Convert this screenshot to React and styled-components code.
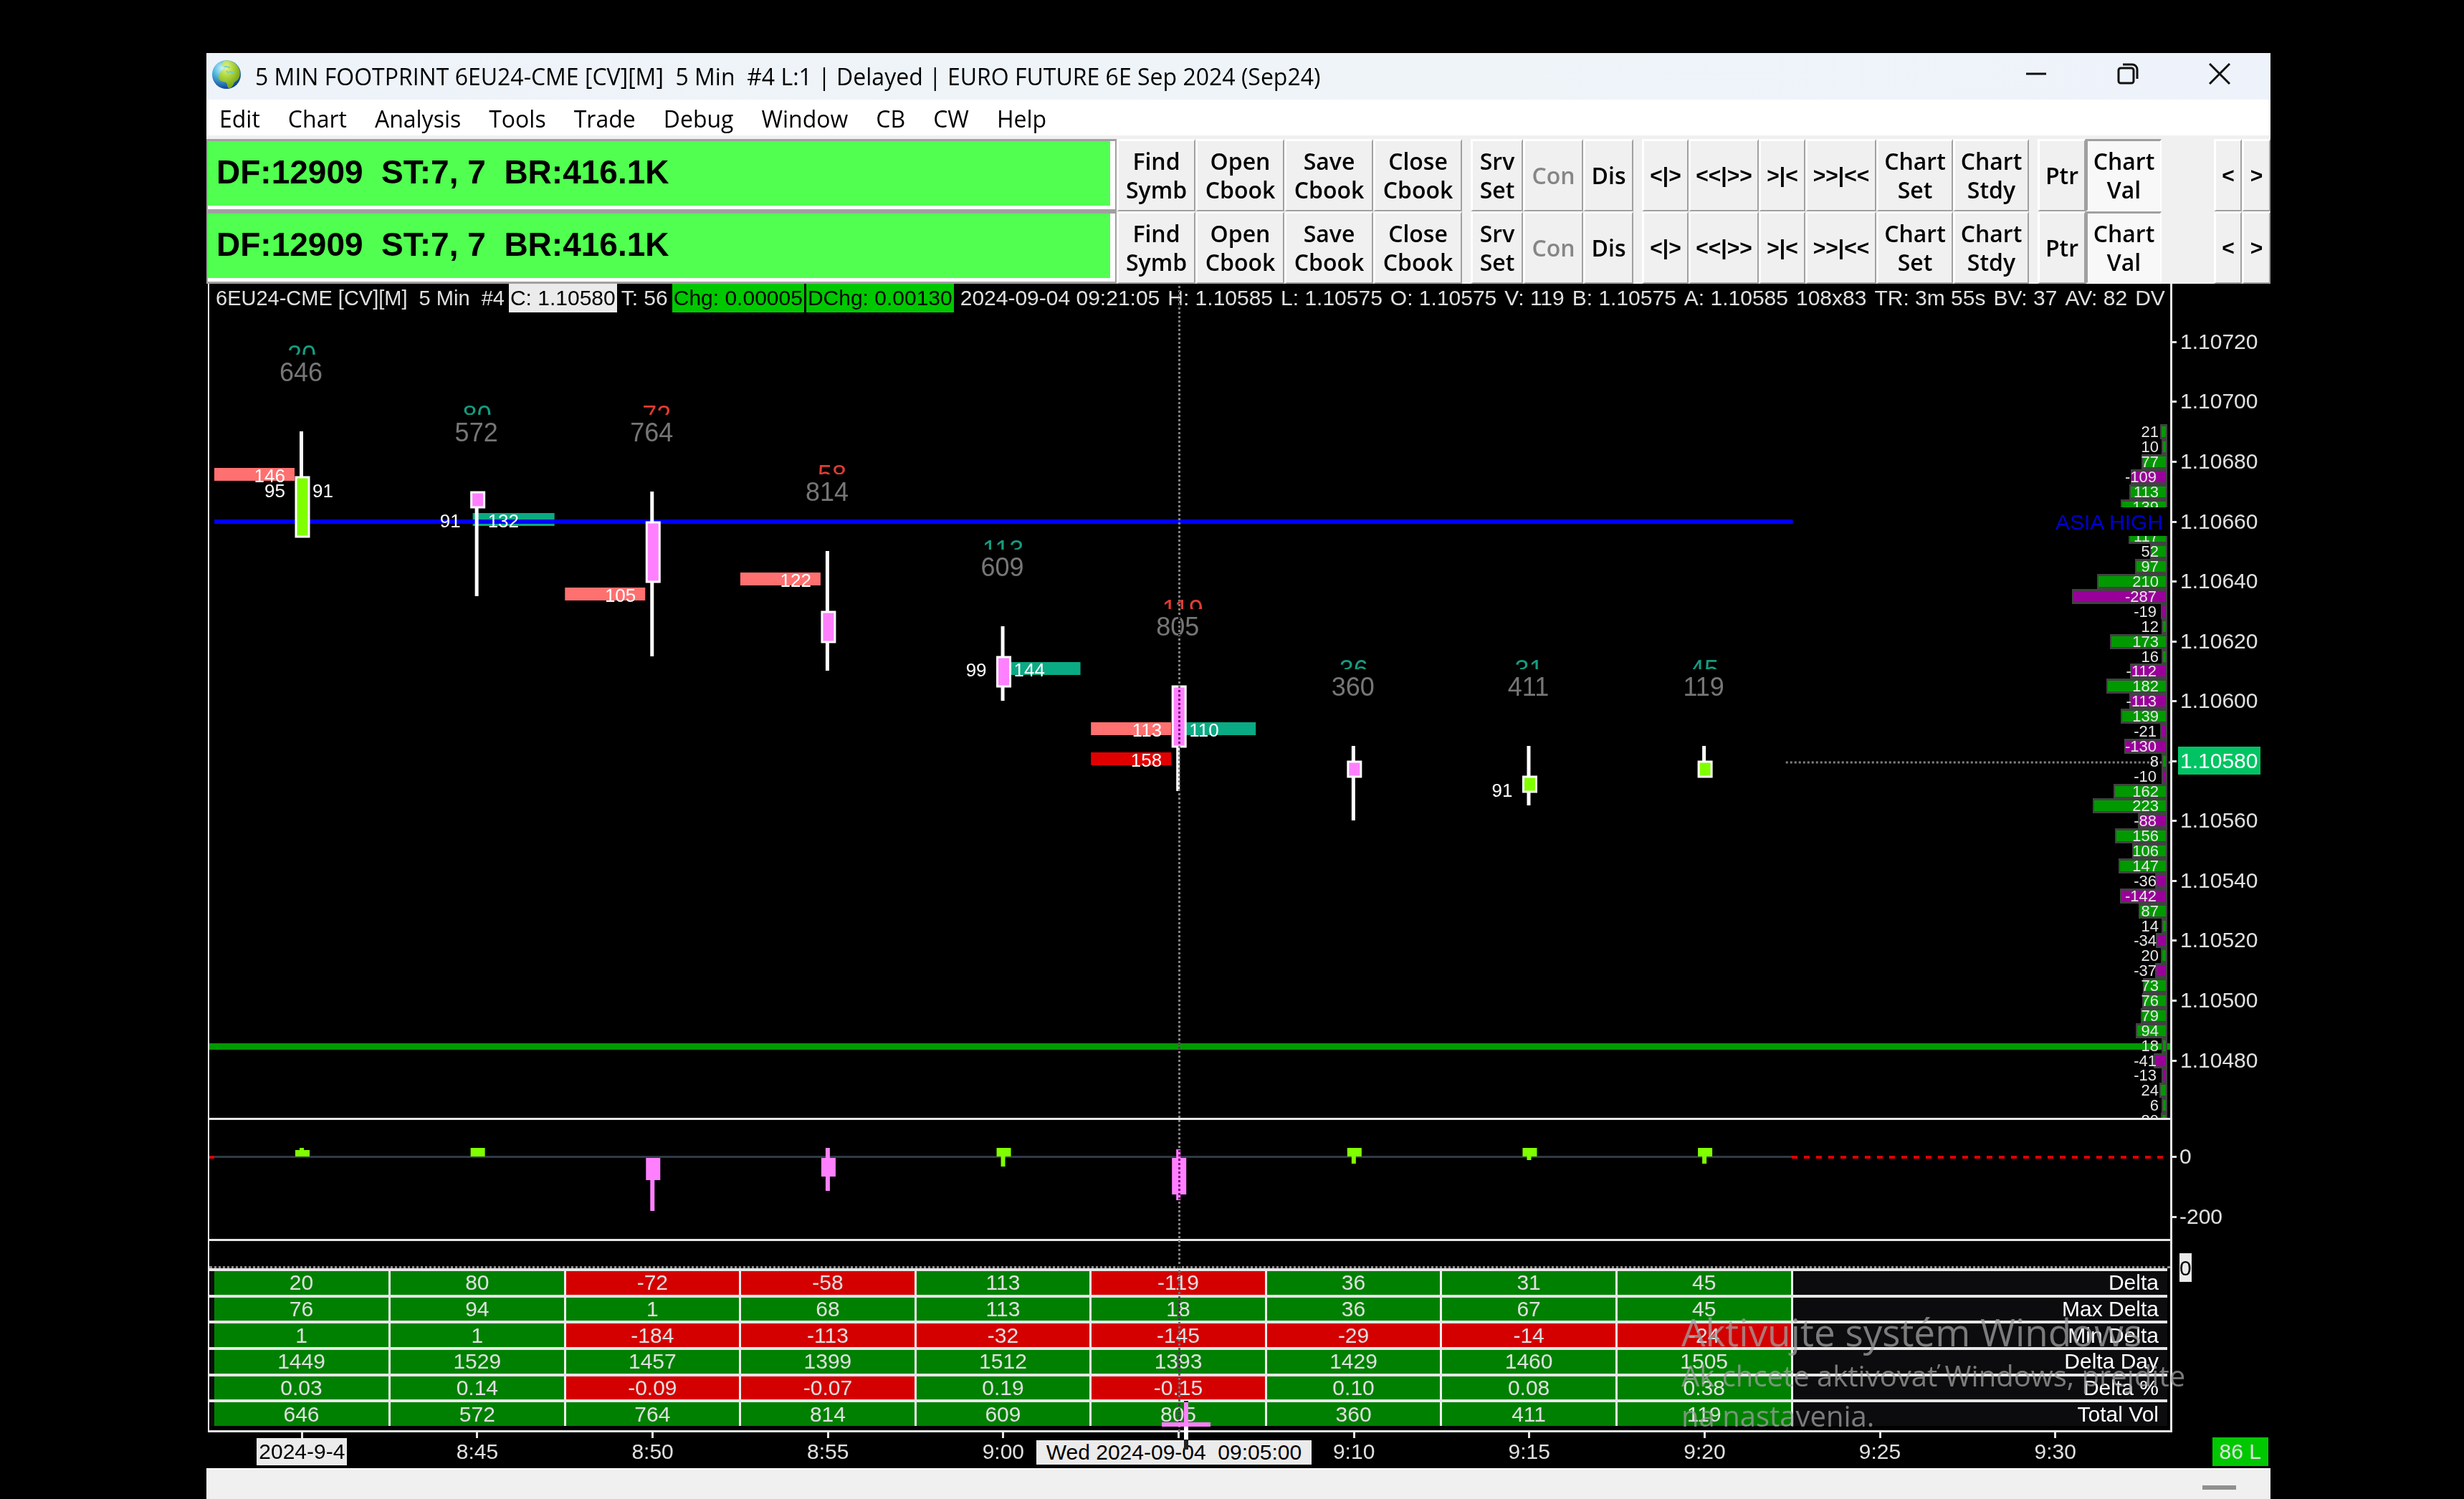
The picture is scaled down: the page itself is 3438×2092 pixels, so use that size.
import styled, { createGlobalStyle } from "styled-components";

const GREEN = "#80ff00";
const PINK = "#ff80ff";
const TEAL = "#0aaa84";
const CORAL = "#ff7070";
const PLOT_WIDTH = 2736;

const menus = ["Edit", "Chart", "Analysis", "Tools", "Trade", "Debug", "Window", "CB", "CW", "Help"];

const toolGroups = [
  [
    { label: "Find\nSymb", w: 110 },
    { label: "Open\nCbook", w: 124 },
    { label: "Save\nCbook", w: 124 },
    { label: "Close\nCbook", w: 124 },
  ],
  [
    { label: "Srv\nSet", w: 73 },
    { label: "Con", w: 84, disabled: true },
    { label: "Dis", w: 70 },
  ],
  [
    { label: "<|>", w: 65, symbol: true },
    { label: "<<|>>", w: 98, symbol: true },
    { label: ">|<", w: 65, symbol: true },
    { label: ">>|<<", w: 99, symbol: true },
    { label: "Chart\nSet", w: 107 },
    { label: "Chart\nStdy", w: 106 },
  ],
  [
    { label: "Ptr", w: 67 },
    { label: "Chart\nVal", w: 106, pressed: true },
  ],
];

const scrollTools = [
  { label: "<", w: 39, symbol: true },
  { label: ">", w: 40, symbol: true },
];

const quote = [
  "2024-09-04 09:21:05",
  "H: 1.10585",
  "L: 1.10575",
  "O: 1.10575",
  "V: 119",
  "B: 1.10575",
  "A: 1.10585",
  "108x83",
  "TR: 3m 55s",
  "BV: 37",
  "AV: 82",
  "DV",
];

// prices are in points: 10690 is 1.10690
const candles = [
  { up: true, high: 10690, low: 10655, top: 10675, bottom: 10655, delta: 20, total: 646 },
  { high: 10670, low: 10635, top: 10670, bottom: 10665, delta: 80, total: 572 },
  { high: 10670, low: 10615, top: 10660, bottom: 10640, delta: -72, total: 764 },
  { high: 10650, low: 10610, top: 10630, bottom: 10620, delta: -58, total: 814 },
  { high: 10625, low: 10600, top: 10615, bottom: 10605, delta: 113, total: 609 },
  { high: 10605, low: 10570, top: 10605, bottom: 10585, delta: -119, total: 805 },
  { high: 10585, low: 10560, top: 10580, bottom: 10575, delta: 36, total: 360 },
  { up: true, high: 10585, low: 10565, top: 10575, bottom: 10570, delta: 31, total: 411 },
  { up: true, high: 10585, low: 10575, top: 10580, bottom: 10575, delta: 45, total: 119 },
];

const prints = [
  { slot: 0, price: 10675, bid: 146, bidFill: CORAL },
  { slot: 0, price: 10670, bid: 95, ask: 91 },
  { slot: 1, price: 10660, bid: 91, ask: 132, askFill: TEAL },
  { slot: 2, price: 10635, bid: 105, bidFill: CORAL },
  { slot: 3, price: 10640, bid: 122, bidFill: CORAL },
  { slot: 4, price: 10610, bid: 99, ask: 144, askFill: TEAL },
  { slot: 5, price: 10590, bid: 113, bidFill: CORAL, ask: 110, askFill: TEAL },
  { slot: 5, price: 10580, bid: 158, bidFill: "#e00000" },
  { slot: 7, price: 10570, bid: 91 },
];

// delta per price, from 1.10690 down in half-pip steps; null is behind the line label
const profile = [
  21, 10, 77, -109, 113, 139, null, 117, 52, 97, 210, -287, -19, 12, 173, 16, -112, 182, -113, 139, -21, -130,
  8, -10, 162, 223, -88, 156, 106, 147, -36, -142, 87, 14, -34, 20, -37, 73, 76, 79, 94, 18, -41, -13, 24, 6, 20,
].map((value, i) => ({ value, y: priceY(10690 - i * 5) }));

// [body top, body bottom, wick top, wick bottom]
const deltaBars = [
  [42, 51, 39, 51],
  [39, 51, 39, 51],
  [53, 84, 53, 127],
  [53, 79, 39, 99],
  [39, 51, 39, 65],
  [53, 104, 41, 112],
  [39, 51, 39, 61],
  [39, 51, 39, 56],
  [39, 51, 39, 61],
];

const stats = [
  ["Delta", ["20", "80", "-72", "-58", "113", "-119", "36", "31", "45"]],
  ["Max Delta", ["76", "94", "1", "68", "113", "18", "36", "67", "45"]],
  ["Min Delta", ["1", "1", "-184", "-113", "-32", "-145", "-29", "-14", "-24"]],
  ["Delta Day", ["1449", "1529", "1457", "1399", "1512", "1393", "1429", "1460", "1505"]],
  ["Delta %", ["0.03", "0.14", "-0.09", "-0.07", "0.19", "-0.15", "0.10", "0.08", "0.38"]],
  ["Total Vol", ["646", "572", "764", "814", "609", "805", "360", "411", "119"]],
];

const times = ["2024-9-4", "8:45", "8:50", "8:55", "9:00", "", "9:10", "9:15", "9:20", "9:25", "9:30"];
const axisPrices = [10720, 10700, 10680, 10660, 10640, 10620, 10600, 10580, 10560, 10540, 10520, 10500, 10480];

function slotX(i) {
  return `${((129 + 244.64 * i) / PLOT_WIDTH) * 100}%`;
}

function priceY(p) {
  return Math.round(208 + (10680 - p) * 4.1775);
}

const Globe = () => (
  <svg width="40" height="42" viewBox="0 0 40 42" aria-hidden="true">
    <defs>
      <radialGradient id="sea" cx="35%" cy="28%" r="75%">
        <stop offset="0" stopColor="#c8f4fb" />
        <stop offset="0.45" stopColor="#4ab2dc" />
        <stop offset="1" stopColor="#0c3f94" />
      </radialGradient>
      <radialGradient id="land" cx="35%" cy="25%" r="80%">
        <stop offset="0" stopColor="#e6f58a" />
        <stop offset="0.5" stopColor="#a4cf35" />
        <stop offset="1" stopColor="#6f9a12" />
      </radialGradient>
    </defs>
    <circle cx="20" cy="21" r="20" fill="url(#sea)" />
    <path
      d="M17 2c8-2 17 3 20 10 3 6 2 12-1 16-3 3-5 3-6 6-1 3-4 7-7 6-3-2-1-6-4-8-4-1-9-2-10-6-1-4 2-6 3-9 2-3 5-2 6-5 0-2-4-1-4-4 0-3 1-5 3-6z"
      fill="url(#land)"
    />
    <path d="M17 10c3-1 5 1 8 1M24 17c3 0 4 2 7 2M20 16l3 3" stroke="#6fd0c8" strokeWidth="2" fill="none" />
  </svg>
);

const Tool = ({ tool }) => (
  <ToolButton $w={tool.w} $pressed={tool.pressed} $symbol={tool.symbol} disabled={tool.disabled}>
    {tool.label}
  </ToolButton>
);

const Toolbar = () => (
  <ToolRow>
    <StatusField>{"DF:12909  ST:7, 7  BR:416.1K"}</StatusField>
    {toolGroups.map((group, i) => (
      <ToolGroup key={i}>
        {group.map((tool) => (
          <Tool key={tool.label} tool={tool} />
        ))}
      </ToolGroup>
    ))}
    <ScrollGroup>
      {scrollTools.map((tool) => (
        <Tool key={tool.label} tool={tool} />
      ))}
    </ScrollGroup>
  </ToolRow>
);

const Candle = ({ data, slot }) => {
  const high = priceY(data.high);
  const top = priceY(data.top);
  return (
    <svg x={slotX(slot)} overflow="visible">
      <rect x="-3" y={high} width="5" height={priceY(data.low) - high} fill="#fff" />
      <rect
        x="-8"
        y={top + 1}
        width="18"
        height={priceY(data.bottom) - top}
        fill={data.up ? GREEN : PINK}
        stroke="#fff"
        strokeWidth="3"
      />
      <svg x="-60" y={high - 123} width="120" height="16">
        <PlotText $size={36} x="60" y="29" textAnchor="middle" fill={data.delta < 0 ? "#e23c32" : "#159c80"}>
          {data.delta}
        </PlotText>
      </svg>
      <PlotText $size={36} x="-1" y={high - 70} textAnchor="middle" fill="#767676">
        {data.total}
      </PlotText>
    </svg>
  );
};

const MainPlot = () => (
  <PlotSvg $h={1124}>
    <rect x="0" y={priceY(10485) - 3} width="100%" height="9" fill="#009900" />
    {prints.map((p) => (
      <svg key={p.slot + "-" + p.price} x={slotX(p.slot)} y={priceY(p.price)} overflow="visible">
        {p.bidFill && <rect x="-122" y="-12" width="112" height="18" fill={p.bidFill} />}
        {p.askFill && <rect x="-6" y="-12" width="114" height="18" fill={p.askFill} />}
      </svg>
    ))}
    <rect x="7" y="289" width="80.5%" height="6" fill="#0000ff" />
    {candles.map((c, i) => (
      <Candle key={i} data={c} slot={i} />
    ))}
    {prints.map((p) => (
      <svg key={p.slot + "-" + p.price} x={slotX(p.slot)} y={priceY(p.price)} overflow="visible">
        <PlotText $size={26} x="-23" y="8" textAnchor="end" fill="#fff">
          {p.bid}
        </PlotText>
        {p.ask && (
          <PlotText $size={26} x="15" y="8" fill="#fff">
            {p.ask}
          </PlotText>
        )}
      </svg>
    ))}
    <line x1="80.4%" x2="100%" y1="628" y2="628" stroke="#808080" strokeWidth="3" strokeDasharray="3 3" />
    <svg x="100%" overflow="visible">
      {profile.map(({ value, y }) => {
        const w = Math.max(4, Math.round(Math.abs(value) * 0.465 - 4));
        return (
          <g key={y}>
            <rect x={-8 - w} y={y - 10} width={w + 4} height="21" fill="#424242" />
            <rect x={-6 - w} y={y - 7} width={w} height="15" fill={value < 0 ? "#990099" : "#009900"} />
          </g>
        );
      })}
      {profile.map(({ value, y }) => (
        <PlotText key={y} $size={22} x={value < 0 ? -19 : -16} y={y + 8} textAnchor="end" fill="#e6e6e6">
          {value}
        </PlotText>
      ))}
      <rect x="-200" y="272" width="198" height="40" fill="#000" />
      <PlotText $size={30} x="-10" y="303" textAnchor="end" fill="#0000d0">
        ASIA HIGH
      </PlotText>
    </svg>
  </PlotSvg>
);

const DeltaPlot = () => (
  <PlotSvg $h={166}>
    <rect x="0" y="50" width="7" height="4" fill="#e00000" />
    <rect x="7" y="50" width="80.5%" height="3" fill="#303a46" />
    <line x1="80.7%" x2="99.8%" y1="52" y2="52" stroke="#e00000" strokeWidth="4" strokeDasharray="8 9" />
    {deltaBars.map(([top, bottom, wickTop, wickBottom], i) => {
      const fill = top < 52 ? GREEN : PINK;
      return (
        <svg key={i} x={slotX(i)} overflow="visible">
          <rect x="-3" y={wickTop} width="6" height={wickBottom - wickTop} fill={fill} />
          <rect x="-9" y={top} width="20" height={bottom - top} fill={fill} />
        </svg>
      );
    })}
  </PlotSvg>
);

const PriceAxis = () => (
  <PlotSvg $h={1600}>
    {axisPrices.map((p) => {
      const y = priceY(p) + 40;
      const last = p === 10580;
      return (
        <g key={p}>
          <rect x="0" y={y - 1} width="6" height="3" fill="#e6e6e6" />
          {last && <rect x="8" y={y - 20} width="115" height="39" fill="#00c463" />}
          <PlotText $size={30} x="11" y={y + 10} fill={last ? "#fff" : "#e0e0e0"}>
            {`1.${p}`}
          </PlotText>
        </g>
      );
    })}
    <rect x="0" y="1217" width="6" height="3" fill="#e6e6e6" />
    <PlotText $size={30} x="10" y="1228" fill="#e0e0e0">
      0
    </PlotText>
    <rect x="0" y="1301" width="6" height="3" fill="#e6e6e6" />
    <PlotText $size={30} x="10" y="1312" fill="#e0e0e0">
      -200
    </PlotText>
    <rect x="10" y="1353" width="17" height="40" fill="#ebebeb" />
    <PlotText $size={30} x="10" y="1384" fill="#000">
      0
    </PlotText>
  </PlotSvg>
);

const StatsTable = () => (
  <Stats>
    <colgroup>
      <col width="7" />
      {candles.map((c, i) => (
        <col key={i} />
      ))}
      <col width="524" />
    </colgroup>
    <tbody>
      {stats.map(([name, values]) => (
        <tr key={name}>
          <td />
          {values.map((v, i) => (
            <StatCell key={i} $negative={v.startsWith("-")}>
              {v}
            </StatCell>
          ))}
          <StatName scope="row">{name}</StatName>
        </tr>
      ))}
    </tbody>
  </Stats>
);

const App = () => (
  <>
    <GlobalStyle />
    <Desktop>
      <AppWindow>
        <TitleBar>
          <Globe />
          <Title>{"5 MIN FOOTPRINT 6EU24-CME [CV][M]  5 Min  #4 L:1 | Delayed | EURO FUTURE 6E Sep 2024 (Sep24)"}</Title>
          <WindowButton aria-label="Minimize">
            <svg width="30" height="30" viewBox="0 0 30 30" stroke="#111" strokeWidth="3">
              <path d="M1 15h28" />
            </svg>
          </WindowButton>
          <WindowButton aria-label="Restore">
            <svg width="30" height="30" viewBox="0 0 30 30" fill="none" stroke="#111" strokeWidth="3">
              <rect x="2" y="7" width="21" height="21" rx="3" />
              <path d="M8 2h13a7 7 0 0 1 7 7v13" />
            </svg>
          </WindowButton>
          <WindowButton aria-label="Close">
            <svg width="30" height="30" viewBox="0 0 30 30" stroke="#111" strokeWidth="3">
              <path d="M1 1l28 28M29 1L1 29" />
            </svg>
          </WindowButton>
        </TitleBar>
        <MenuBar>
          {menus.map((m) => (
            <MenuButton key={m}>{m}</MenuButton>
          ))}
        </MenuBar>
        <Toolbars>
          <Toolbar />
          <Toolbar />
        </Toolbars>
        <Chart>
          <Plots>
            <InfoBar>
              <Symbol>{"6EU24-CME [CV][M]  5 Min  #4"}</Symbol>
              <Tag>C: 1.10580</Tag>
              <span>T: 56</span>
              <Tag $green>Chg: 0.00005</Tag>
              <Tag $green>DChg: 0.00130</Tag>
              <Quote>
                {quote.map((q) => (
                  <span key={q}>{q}</span>
                ))}
              </Quote>
            </InfoBar>
            <MainPlot />
            <Divider />
            <DeltaPlot />
            <Divider />
            <StatsGap />
            <StatsTable />
          </Plots>
          <PriceAxis />
          <TimeAxis>
            {times.map((t, i) => (
              <TimeSlot key={i}>{i === 0 ? <DateLabel>{t}</DateLabel> : t}</TimeSlot>
            ))}
          </TimeAxis>
          <LastCell>
            <CountBadge>86 L</CountBadge>
          </LastCell>
          <Crosshair />
          <CursorTime>{"Wed 2024-09-04  09:05:00"}</CursorTime>
          <Cursor width="68" height="68" viewBox="0 0 68 68" aria-hidden="true">
            <path d="M34 0v68" stroke="#222" strokeWidth="6" />
            <path d="M34 2v30M0 33h68" stroke={PINK} strokeWidth="6" />
            <path d="M34 36v18" stroke="#fff" strokeWidth="6" />
          </Cursor>
          <Watermark>
            <h2>Aktivujte systém Windows</h2>
            <p>
              Ak chcete aktivovať Windows, prejdite
              <br />
              na nastavenia.
            </p>
          </Watermark>
        </Chart>
        <Footer>
          <Grip />
        </Footer>
      </AppWindow>
    </Desktop>
  </>
);

export default App;

const GlobalStyle = createGlobalStyle`
  * {
    box-sizing: border-box;
  }

  body {
    margin: 0;
    background: #000;
    font-family: "Liberation Sans", Arial, sans-serif;
  }

  button {
    margin: 0;
    padding: 0;
    border: 0;
    background: none;
    font: inherit;
    color: inherit;
  }
`;

const Desktop = styled.main`
  min-height: 100vh;
  padding: 74px 270px 0 288px;
  background: #000;
`;

const AppWindow = styled.div`
  min-height: calc(100vh - 74px);
  display: flex;
  flex-direction: column;
  background: #f0f0f0;
  color: #000;
`;

const TitleBar = styled.header`
  display: flex;
  align-items: flex-start;
  height: 65px;
  padding: 0 7px 0 8px;
  background: linear-gradient(90deg, #eef3fa, #eff4f8 50%, #eef3fb);

  > svg {
    margin-top: 9px;
  }
`;

const Title = styled.h1`
  flex: 1;
  margin: 0 0 0 20px;
  font: 400 32px/65px "Open Sans", sans-serif;
  white-space: pre;
`;

const WindowButton = styled.button`
  display: flex;
  align-items: center;
  justify-content: center;
  width: 128px;
  height: 57px;
`;

const MenuBar = styled.nav`
  display: flex;
  gap: 39px;
  height: 50px;
  padding-left: 18px;
  background: #fff;
`;

const MenuButton = styled.button`
  font: 400 32px/54px "Open Sans", sans-serif;
`;

const Toolbars = styled.div`
  padding-top: 5px;
`;

const ToolRow = styled.div`
  display: flex;
  height: 101px;
`;

const StatusField = styled.div`
  flex: 1;
  border: solid #a0a0a0;
  border-width: 3px 2px;
  box-shadow: inset -7px -5px #fff;
  background: #50ff50;
  padding-left: 12px;
  font-size: 46px;
  font-weight: 700;
  line-height: 86px;
  white-space: pre;
`;

const ToolGroup = styled.div`
  display: flex;

  & + & {
    margin-left: 12px;
  }
`;

const ScrollGroup = styled.div`
  display: flex;
  margin-left: 73px;
`;

const ToolButton = styled.button`
  width: ${(p) => p.$w}px;
  border: solid;
  border-width: 3px 2px 2px 3px;
  border-color: ${(p) => (p.$pressed ? "#a0a0a0 #fff #fff #a0a0a0" : "#fff #a0a0a0 #a0a0a0 #fff")};
  background: ${(p) => (p.$pressed ? "#f8f8f8" : "#f0f0f0")};
  font: 600 32px/40px "Open Sans", sans-serif;
  white-space: pre;
  color: #000;

  ${(p) => p.$symbol && `font: 700 30px/40px "Liberation Sans", Arial, sans-serif;`}

  &:disabled {
    color: #868686;
  }
`;

const Chart = styled.section`
  position: relative;
  display: grid;
  grid-template-columns: 1fr 137px;
  padding-left: 2px;
  background: #000;
  color: #e0e0e0;
  font-size: 30px;
  border-bottom: 2px solid #fff;
`;

const Plots = styled.div`
  min-width: 0;
  border: solid #e6e6e6;
  border-width: 0 3px 3px 2px;
`;

const InfoBar = styled.div`
  display: flex;
  gap: 6px;
  height: 40px;
  padding-left: 9px;
  line-height: 40px;
  white-space: pre;
  overflow: hidden;
`;

const Symbol = styled.span`
  font-size: 29px;
`;

const Tag = styled.span`
  padding: 0 2px;
  background: ${(p) => (p.$green ? "#00c800" : "#ebebeb")};
  color: #000;

  & + & {
    margin-left: -3px;
  }
`;

const Quote = styled.div`
  display: flex;
  gap: 11px;
  padding-left: 3px;
`;

const PlotSvg = styled.svg`
  display: block;
  width: 100%;
  height: ${(p) => p.$h}px;
  overflow: hidden;
`;

const PlotText = styled.text`
  font-family: "Liberation Sans", Arial, sans-serif;
  font-size: ${(p) => p.$size}px;
`;

const Divider = styled.div`
  height: 3px;
  background: #e6e6e6;
`;

const StatsGap = styled.div`
  height: 38px;
  border-bottom: 3px dotted #909090;
`;

const Stats = styled.table`
  width: calc(100% - 4px);
  height: 220px;
  margin-bottom: 6px;
  border-collapse: collapse;
  table-layout: fixed;
  line-height: 32px;
  background: #0c0c0e;

  td,
  th {
    padding: 0;
    border-top: 4px solid #e6e6e6;
  }
`;

const StatCell = styled.td`
  background: ${(p) => (p.$negative ? "#d40000" : "#008000")};
  border-right: 3px solid #f0f0f0;
  text-align: center;
`;

const StatName = styled.th`
  && {
    padding-right: 12px;
  }
  color: #fff;
  font-weight: 400;
  text-align: right;
`;

const TimeAxis = styled.div`
  display: grid;
  grid-template-columns: repeat(11, 1fr) 38px;
  height: 50px;
  padding: 0 3px 0 9px;
`;

const TimeSlot = styled.div`
  display: flex;
  flex-direction: column;
  align-items: center;
  line-height: 38px;

  &::before {
    content: "";
    width: 3px;
    height: 8px;
    background: #e6e6e6;
  }
`;

const DateLabel = styled.span`
  padding: 0 3px;
  background: #ebebeb;
  color: #000;
`;

const LastCell = styled.div`
  display: flex;
  align-items: center;
  justify-content: flex-end;
  padding: 4px 3px 0 0;
`;

const CountBadge = styled.span`
  padding: 0 10px;
  line-height: 40px;
  background: #00c800;
`;

const Crosshair = styled.div`
  position: absolute;
  left: 47.1%;
  top: 3px;
  bottom: 50px;
  width: 3px;
  background: repeating-linear-gradient(#808080 0 3px, transparent 3px 6px);
  mix-blend-mode: difference;
`;

const CursorTime = styled.div`
  position: absolute;
  left: 40.2%;
  bottom: 5px;
  padding: 0 14px;
  line-height: 34px;
  white-space: pre;
  background: #ebebeb;
  color: #000;
`;

const Cursor = styled.svg`
  position: absolute;
  left: 46.3%;
  bottom: 26px;
`;

const Watermark = styled.div`
  position: absolute;
  right: 110px;
  bottom: 45px;
  width: 712px;
  color: rgba(160, 160, 160, 0.75);
  font-family: "Open Sans", sans-serif;
  white-space: nowrap;

  h2,
  p {
    margin: 0;
    font-weight: 400;
  }

  h2 {
    font-size: 53px;
    line-height: 66px;
  }

  p {
    font-size: 40px;
    line-height: 56px;
  }
`;

const Footer = styled.footer`
  flex: 1;
  display: flex;
  justify-content: flex-end;
  min-height: 32px;
  padding: 22px 48px 0 0;
`;

const Grip = styled.div`
  width: 47px;
  height: 6px;
  background: #909090;
`;
